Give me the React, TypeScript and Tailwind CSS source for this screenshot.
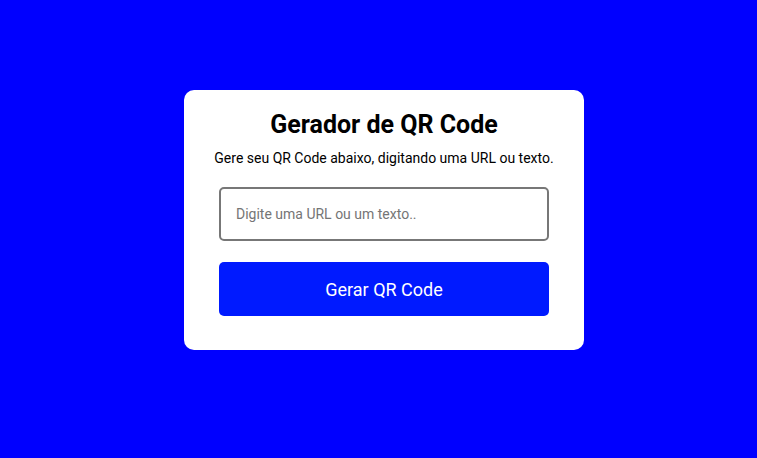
export default function App() {
  return (
    <div className="min-h-screen w-full bg-[#0000ff] flex items-center justify-center pl-[11px] pb-[18px] font-['Roboto',sans-serif]">
      <div className="w-[400px] bg-white rounded-[10px] px-[35px] pt-[20px] pb-[34px] flex flex-col items-center">
        <h1 className="text-[25px] leading-[30px] font-bold text-black">Gerador de QR Code</h1>
        <p className="text-[14px] leading-[20px] text-black mt-[8px] whitespace-nowrap">
          Gere seu QR Code abaixo, digitando uma URL ou texto.
        </p>
        <input
          type="text"
          placeholder="Digite uma URL ou um texto.."
          className="mt-[19px] w-full h-[54px] border-2 border-[#777777] rounded-[5px] px-[15px] text-[14px] text-black placeholder:text-[#757575] outline-none"
        />
        <button className="mt-[21px] w-full h-[54px] bg-[#001aff] rounded-[5px] text-white text-[18px]">
          Gerar QR Code
        </button>
      </div>
    </div>
  );
}
